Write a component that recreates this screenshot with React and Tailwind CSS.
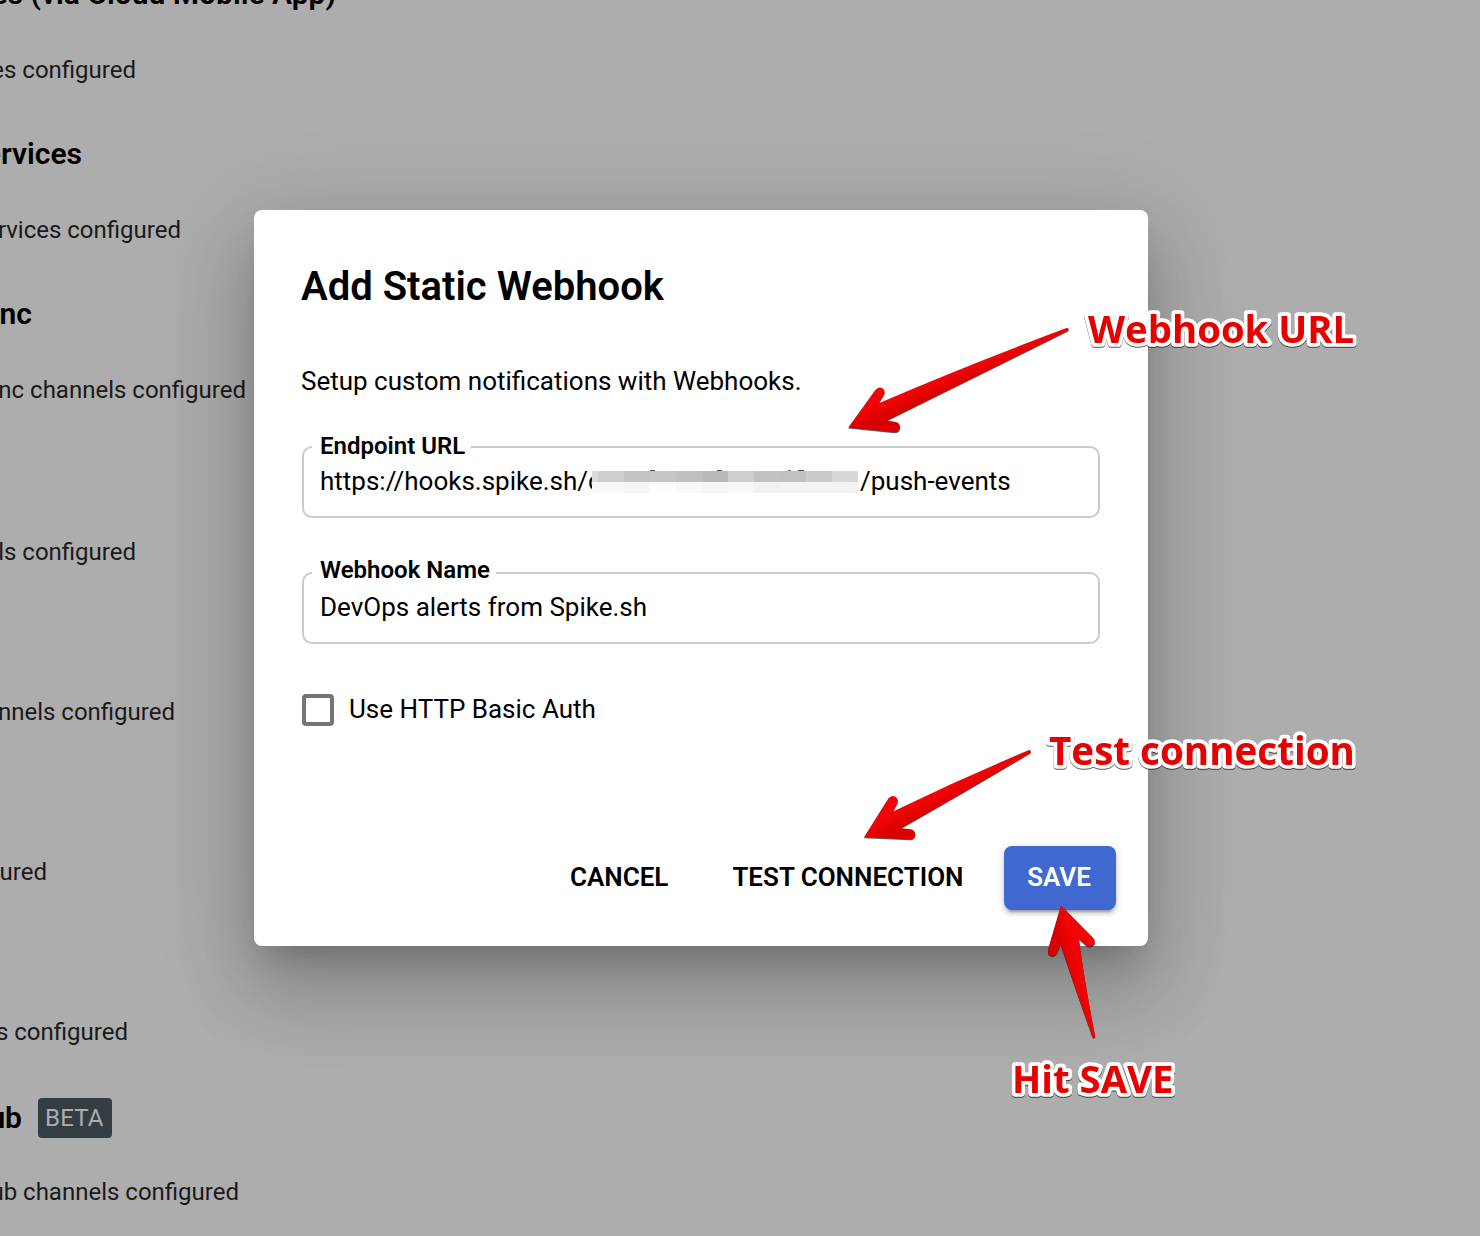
const SECTIONS = [
  { title: "es (via Cloud Mobile App)", titleWidth: "w-[336px]", text: "es configured", textWidth: "w-[136px]", height: "h-[160px]" },
  { title: "ervices", titleWidth: "w-[82px]", text: "rvices configured", textWidth: "w-[181px]", height: "h-[160px]" },
  { title: "nc", titleWidth: "w-[32px]", text: "nc channels configured", textWidth: "w-[246px]", height: "h-[162px]" },
  { text: "ls configured", textWidth: "w-[136px]", height: "h-[160px]" },
  { text: "nnels configured", textWidth: "w-[175px]", height: "h-[160px]" },
  { text: "ured", textWidth: "w-[47px]", height: "h-[160px]" },
  { text: "s configured", textWidth: "w-[128px]", height: "h-[160px]" },
  { title: "ub", titleWidth: "w-[22px]", badge: "BETA", text: "ub channels configured", textWidth: "w-[239px]", height: "h-[160px]" },
];

const MASK_CELLS = [
  ["w-[6px] bg-[#dadada]", "w-[6px] bg-[#f8f8f8]"],
  ["w-[26px] bg-[#cfcfcf]", "w-[26px] bg-[#f7f7f7]"],
  ["w-[26px] bg-[#c4c4c4]", "w-[26px] bg-[#f6f6f6]"],
  ["w-[26px] bg-[#c6c6c6]", "w-[26px] bg-[#fdfdfd]"],
  ["w-[26px] bg-[#c0c0c0]", "w-[26px] bg-[#f9f9f9]"],
  ["w-[26px] bg-[#bababa]", "w-[26px] bg-[#f6f6f6]"],
  ["w-[26px] bg-[#cfcfcf]", "w-[26px] bg-[#f7f7f7]"],
  ["w-[26px] bg-[#c2c2c2]", "w-[26px] bg-[#f2f2f2]"],
  ["w-[26px] bg-[#c1c1c1]", "w-[26px] bg-[#f4f4f4]"],
  ["w-[26px] bg-[#cbcbcb]", "w-[26px] bg-[#f4f4f4]"],
  ["w-[26px] bg-[#d8d8d8]", "w-[26px] bg-[#f2f2f2]"],
];

function Section({ title, titleWidth, badge, text, textWidth, height }) {
  return (
    <section className={`flex flex-col ${height}`}>
      <div className={badge ? "mt-[2px] flex h-10 items-center" : "flex h-10 items-center"}>
        {title && (
          <h2 className={`flex justify-end whitespace-nowrap text-[30px] leading-10 font-semibold text-black ${titleWidth}`}>
            {title}
          </h2>
        )}
        {badge && (
          <span className="ml-4 h-10 rounded bg-[#333d42] pr-2 pl-[7px] text-2xl leading-10 tracking-[0.2px] text-[#adadad]">
            {badge}
          </span>
        )}
      </div>
      <p className={`flex justify-end whitespace-nowrap text-2xl leading-7 text-[#1a1a1a] ${badge ? "mt-10" : "mt-[42px]"} ${textWidth}`}>
        {text}
      </p>
    </section>
  );
}

function MaskedSegment() {
  return (
    <span className="relative mt-[5px] flex h-[22px] w-[266px]">
      {MASK_CELLS.map(([top, bottom], i) => (
        <span key={i} className="flex flex-col">
          <span className={`h-[11px] ${top}`} />
          <span className={`h-[11px] ${bottom}`} />
        </span>
      ))}
      <span className="absolute -top-px left-[58px] h-px w-[5px] bg-[#555]" />
      <span className="absolute -top-px left-[125px] h-px w-[5px] bg-[#555]" />
      <span className="absolute -top-px left-[196px] h-px w-[3px] bg-[#777]" />
      <span className="absolute -top-px left-[206px] h-px w-[6px] bg-[#555]" />
    </span>
  );
}

function Field({ label, labelClass, className, children }) {
  return (
    <div className={`relative flex h-[72px] rounded-[10px] border-2 border-[#cacaca] pl-4 ${className}`}>
      <label className={`absolute left-2 bg-white pl-2 pr-[6px] text-2xl leading-7 font-semibold whitespace-nowrap ${labelClass}`}>
        {label}
      </label>
      <div className="mt-[18px] flex h-[31px] whitespace-nowrap text-[26px] leading-[31px]">{children}</div>
    </div>
  );
}

function Dialog() {
  return (
    <div className="relative flex h-[736px] w-[894px] flex-col rounded-lg bg-white px-12 text-black shadow-[0_22px_30px_-14px_rgba(0,0,0,0.2),0_48px_76px_6px_rgba(0,0,0,0.14),0_18px_92px_16px_rgba(0,0,0,0.12)]">
      <h1 className="mt-[53px] -ml-px text-[40px] leading-[47px] font-semibold">Add Static Webhook</h1>
      <p className="mt-[56px] -ml-px text-[26px] leading-[31px]">Setup custom notifications with Webhooks.</p>
      <Field label="Endpoint URL" labelClass="-top-4" className="mt-[49px]">
        <span className="w-[268px]">https://hooks.spike.sh/</span>
        <span className="w-1 overflow-hidden">c</span>
        <MaskedSegment />
        <span className="ml-[2px]">/push-events</span>
      </Field>
      <Field label="Webhook Name" labelClass="-top-[18px]" className="mt-[54px]">
        DevOps alerts from Spike.sh
      </Field>
      <div className="mt-[50px] flex h-8 items-start">
        <span className="size-8 rounded border-4 border-[#757575]" />
        <span className="-mt-px ml-[15px] text-[26px] leading-[32px]">Use HTTP Basic Auth</span>
      </div>
      <div className="mt-[120px] -mr-4 flex h-16 items-center justify-end text-[26px] leading-[31px] font-semibold">
        <button className="mr-[64px] pb-[2px]">CANCEL</button>
        <button className="mr-[40.5px] pb-[2px]">TEST CONNECTION</button>
        <button className="h-16 w-28 rounded-lg bg-[#3f69d1] pr-[2px] pb-[2px] text-white shadow-[0_6px_2px_-4px_rgba(0,0,0,0.2),0_4px_4px_rgba(0,0,0,0.14),0_2px_10px_rgba(0,0,0,0.12)]">
          SAVE
        </button>
      </div>
    </div>
  );
}

function Callout({ className, textClass, children }) {
  return (
    <svg className={`absolute h-[52px] w-80 overflow-visible [filter:drop-shadow(0_1px_0.7px_rgba(0,0,0,0.65))] ${className}`}>
      <text
        y="41"
        className={`fill-[#e60000] stroke-white stroke-[7.5px] font-['Open_Sans',sans-serif] font-bold [paint-order:stroke_fill] [stroke-linejoin:round] ${textClass}`}
      >
        {children}
      </text>
    </svg>
  );
}

function Arrow({ id, className, viewBox, d, from, to }) {
  return (
    <svg
      className={`absolute overflow-visible [filter:drop-shadow(0_1px_0.7px_rgba(0,0,0,0.65))] ${className}`}
      viewBox={viewBox}
    >
      <defs>
        <linearGradient id={id} gradientUnits="userSpaceOnUse" x1={from[0]} y1={from[1]} x2={to[0]} y2={to[1]}>
          <stop offset="0" stopColor="#f20406" />
          <stop offset="1" stopColor="#d80000" />
        </linearGradient>
      </defs>
      <path d={d} fill={`url(#${id})`} />
    </svg>
  );
}

export default function App() {
  return (
    <div className="relative h-[1236px] w-[1480px] overflow-hidden bg-[#adadad] font-['Roboto',sans-serif]">
      <main className="-mt-[26px] flex flex-col">
        {SECTIONS.map((section) => (
          <Section key={section.text} {...section} />
        ))}
      </main>

      <div className="absolute inset-0 pt-[210px] pl-[254px]">
        <Dialog />
      </div>

      <Arrow
        id="arrow-url"
        className="top-[320px] left-[840px] h-[120px] w-[240px]"
        viewBox="840 320 240 120"
        from={[900, 396]}
        to={[905, 408]}
        d="M848.3 427.5 L875.3 390 Q878.5 386 882.5 388.2 Q886 391 883.8 395 L878.8 403.2 Q965 366 1066.5 328 Q1069.5 328 1068.3 330.5 L886.8 420.5 L896 422 Q900.5 423.5 900 428 Q899 432.5 894.5 432.2 Z"
      />
      <Arrow
        id="arrow-test"
        className="top-[740px] left-[856px] h-[110px] w-[184px]"
        viewBox="856 740 184 110"
        from={[913, 806]}
        to={[919, 818]}
        d="M864 837.3 L888.3 798.5 Q891.5 794.5 895.6 796.7 Q899 799.5 897.2 803.5 L893 811.5 Q960 779 1029 750 Q1031.8 750.3 1030.5 752.7 Q970 789 900.8 828.2 L911 829.3 Q915.6 830.8 915.3 835.3 Q914.3 839.4 910 839.2 Z"
      />
      <Arrow
        id="arrow-save"
        className="top-[900px] left-[1040px] h-[145px] w-[64px]"
        viewBox="1040 900 64 145"
        from={[1077, 962]}
        to={[1065, 965]}
        d="M1061 905.2 L1093.5 938.3 Q1096 941.5 1094 944.8 Q1090.5 948 1086.3 945.4 L1079 939 Q1085 985 1095.3 1036.5 Q1094 1039 1092.5 1036.8 Q1075 988 1060.8 944.8 L1057.3 952.5 Q1054.5 957 1050.3 955.5 Q1047.3 953.5 1048 949.5 Z"
      />

      <Callout className="top-[302px] left-[1088px]" textClass="text-[38.35px]">Webhook URL</Callout>
      <Callout className="top-[724px] left-[1049px]" textClass="text-[38.6px]">Test connection</Callout>
      <Callout className="top-[1052px] left-[1012px]" textClass="text-[38.3px]">Hit SAVE</Callout>
    </div>
  );
}
